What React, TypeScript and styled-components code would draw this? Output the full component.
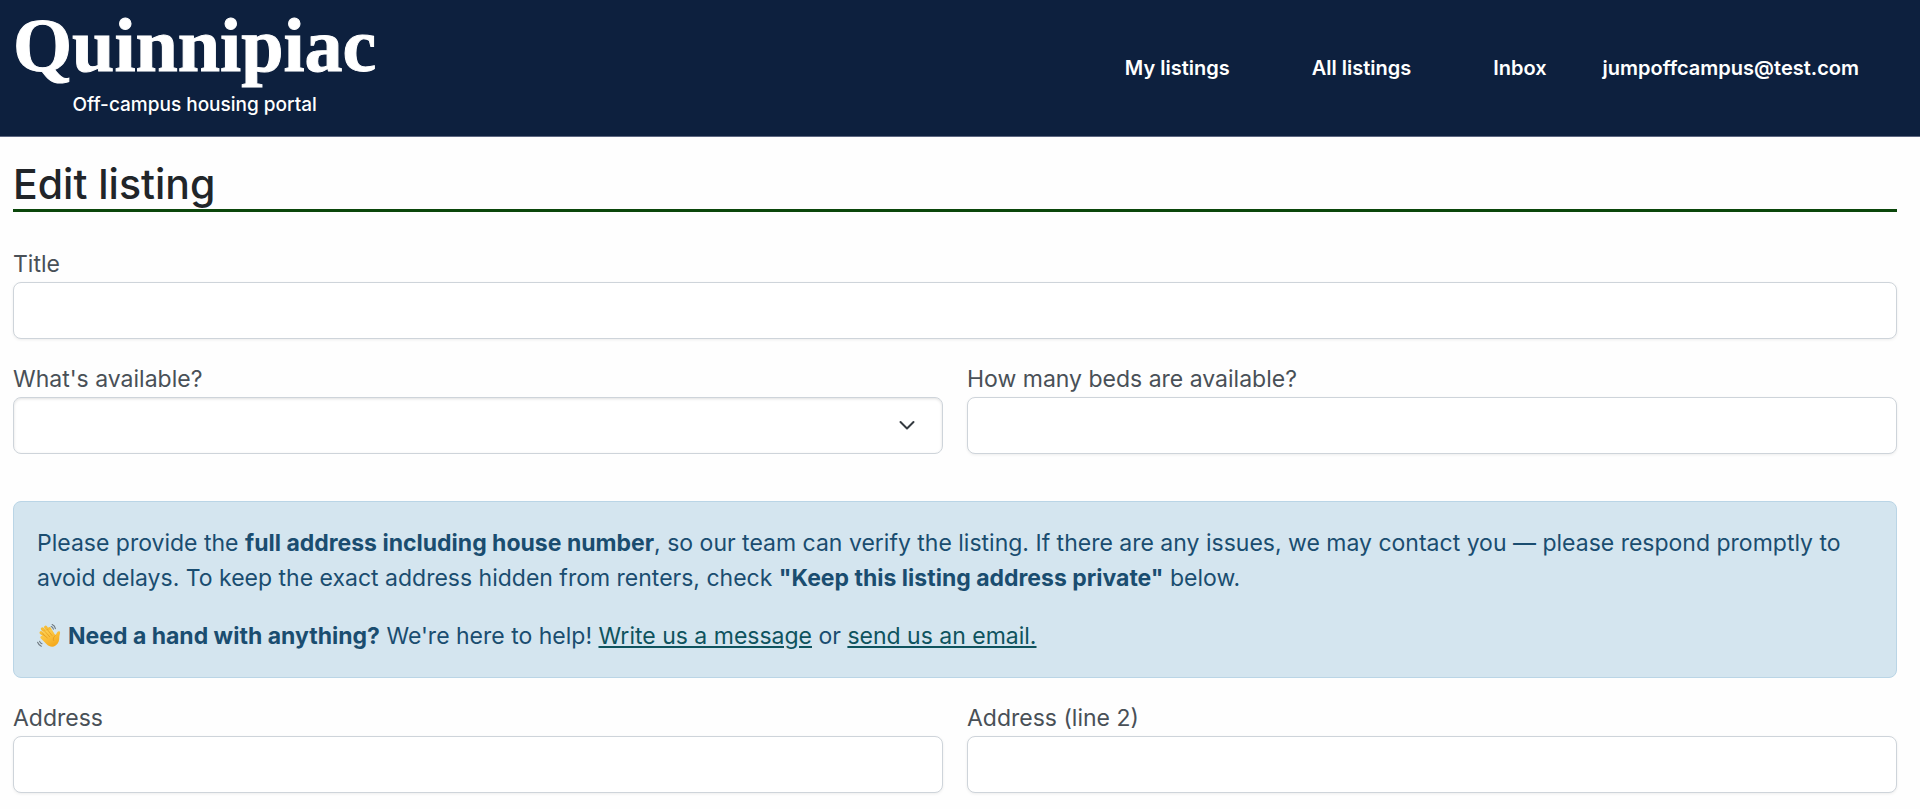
import React from "react";
import styled, { createGlobalStyle } from "styled-components";

const GlobalStyle = createGlobalStyle`
  *, *::before, *::after { box-sizing: border-box; }
  body {
    margin: 0;
    background: #fefefe;
    color: #212529;
    font-family: Inter, "Liberation Sans", sans-serif;
    font-size: 23px;
    line-height: 35px;
  }
`;

const Header = styled.header`
  display: flex;
  align-items: center;
  justify-content: space-between;
  min-height: 137px;
  padding: 0 61px 0 13px;
  background: #0d203e;
  border-bottom: 1px solid #5c6680;
  color: #fff;
`;

const Brand = styled.a`
  display: flex;
  flex-direction: column;
  align-items: center;
  padding-bottom: 6px;
  color: inherit;
  text-decoration: none;
`;

const Wordmark = styled.span`
  font-family: "Liberation Serif", serif;
  font-size: 76px;
  font-weight: 700;
  line-height: 80px;
  -webkit-text-stroke: 1px currentColor;
`;

const Tagline = styled.span`
  font-size: 19px;
  font-weight: 500;
  line-height: 40px;
`;

const Nav = styled.nav`
  display: flex;
  align-items: center;
  gap: 82px;
`;

const Account = styled.div`
  display: flex;
  align-items: center;
  gap: 56px;
`;

const NavLink = styled.a`
  color: #fff;
  font-size: 20px;
  font-weight: 600;
  line-height: 30px;
  text-decoration: none;
`;

const Main = styled.main`
  padding: 23px 23px 16px 13px;
`;

const PageTitle = styled.h1`
  margin: 0 0 35px;
  border-bottom: 3px solid #0b470b;
  font-size: 41px;
  font-weight: 500;
  line-height: 49px;
`;

const Form = styled.form`
  display: flex;
  flex-direction: column;
  gap: 23px;
`;

const Row = styled.div`
  display: grid;
  grid-template-columns: 1fr 1fr;
  gap: 24px;
`;

const Field = styled.div`
  display: flex;
  flex-direction: column;
`;

const Label = styled.label`
  color: #495057;
`;

const Input = styled.input`
  width: 100%;
  height: 57px;
  padding: 0 23px;
  border: 1px solid #ced4da;
  border-radius: 8px;
  background: #fff;
  box-shadow: 0 1px 3px rgba(0, 0, 0, 0.07);
  color: #212529;
  font: inherit;
`;

const SelectWrap = styled.div`
  position: relative;
  display: flex;
`;

const Select = styled.select`
  width: 100%;
  height: 57px;
  padding: 0 56px 0 23px;
  border: 1px solid #ced4da;
  border-radius: 8px;
  background: #fff;
  box-shadow: inset 0 1px 3px rgba(0, 0, 0, 0.12);
  color: #212529;
  font: inherit;
  appearance: none;
`;

const Chevron = styled.svg`
  position: absolute;
  top: 20px;
  right: 28px;
  pointer-events: none;
`;

const Notice = styled.section`
  display: flex;
  flex-direction: column;
  gap: 23px;
  margin-top: 24px;
  padding: 24px 23px 23px;
  border: 1px solid #bad5e6;
  border-radius: 8px;
  background: #d4e5ef;
  color: #1a4d70;

  p { margin: 0; }
  strong { font-weight: 700; }
`;

const Link = styled.a`
  color: #0e535e;
  text-decoration: underline;
`;

const Wave = styled.svg`
  margin-right: 7px;
  vertical-align: -4px;
`;

function WavingHand() {
  return (
    <Wave width="24" height="24" viewBox="0 0 24 24" role="img" aria-label="Waving hand">
      <defs>
        <linearGradient id="skin" x1="0" y1="0" x2="0.6" y2="1">
          <stop offset="0" stopColor="#ffd75a" />
          <stop offset="1" stopColor="#f5a91d" />
        </linearGradient>
      </defs>
      <g fill="none" stroke="#f7bd36" strokeLinecap="round" strokeWidth="3.2">
        <path d="M11 14 4.1 8.8" />
        <path d="M12 12 5.4 4.9" />
        <path d="M14 11 8.6 3.2" />
        <path d="M16 11.5 12.4 4.6" />
      </g>
      <path
        d="M4.2 12.1c-1.1.6-1.2 1.6-.3 2.5l5.5 5.5c2.7 2.7 6.3 3.7 9.2 1.5 3.2-2.4 3.7-5.3 3.7-8.4 0-1.7.8-3 .8-4.7 0-1.4-1.8-1.8-2.7-.5-.9 1.2-1.1 2.4-2.2 3.1L14.5 5.3 6 7.5 9.2 13 6 11.9z"
        fill="url(#skin)"
      />
      <path
        d="M5.6 9.9l4.7 4M7.3 6.7l5.3 6M10.3 5.5l4.7 6M18.3 11.5c-1.9 1.5-2.4 3.1-1.7 5"
        fill="none"
        stroke="#de8e16"
        strokeLinecap="round"
        strokeWidth="0.6"
      />
      <path
        d="M14.2 2.5c1 .3 1.9 1.4 2.2 2.6M15.2.6c1.7.8 2.9 2.2 3.2 4M2.6 17.3c.4 1.2 1.2 2.1 2.4 2.5M.6 18.3c.7 1.9 2 3.2 3.7 3.9"
        fill="none"
        stroke="#6f7980"
        strokeLinecap="round"
        strokeWidth="1.1"
      />
    </Wave>
  );
}

function TextField({ id, label, type = "text" }: { id: string; label: string; type?: string }) {
  return (
    <Field>
      <Label htmlFor={id}>{label}</Label>
      <Input id={id} name={id} type={type} />
    </Field>
  );
}

export default function App() {
  return (
    <>
      <GlobalStyle />
      <Header>
        <Brand href="#">
          <Wordmark>Quinnipiac</Wordmark>
          <Tagline>Off-campus housing portal</Tagline>
        </Brand>
        <Account>
          <Nav>
            <NavLink href="#my-listings">My listings</NavLink>
            <NavLink href="#all-listings">All listings</NavLink>
            <NavLink href="#inbox">Inbox</NavLink>
          </Nav>
          <NavLink href="#account">jumpoffcampus@test.com</NavLink>
        </Account>
      </Header>
      <Main>
        <PageTitle>Edit listing</PageTitle>
        <Form>
          <TextField id="title" label="Title" />
          <Row>
            <Field>
              <Label htmlFor="available">What's available?</Label>
              <SelectWrap>
                <Select id="available" name="available" defaultValue="">
                  <option value="" />
                </Select>
                <Chevron width="16" height="16" viewBox="0 0 16 16" aria-hidden="true">
                  <path d="m1.5 5 6.5 6.5L14.5 5" fill="none" stroke="#343a40" strokeWidth="2" strokeLinecap="round" strokeLinejoin="round" />
                </Chevron>
              </SelectWrap>
            </Field>
            <TextField id="beds" label="How many beds are available?" />
          </Row>
          <Notice>
            <p>
              Please provide the <strong>full address including house number</strong>, so our team can verify the
              listing. If there are any issues, we may contact you — please respond promptly to avoid delays. To keep
              the exact address hidden from renters, check <strong>"Keep this listing address private"</strong> below.
            </p>
            <p>
              <WavingHand />
              <strong>Need a hand with anything?</strong> We're here to help! <Link href="#message">Write us a message</Link> or{" "}
              <Link href="#email">send us an email.</Link>
            </p>
          </Notice>
          <Row>
            <TextField id="address" label="Address" />
            <TextField id="address2" label="Address (line 2)" />
          </Row>
        </Form>
      </Main>
    </>
  );
}
